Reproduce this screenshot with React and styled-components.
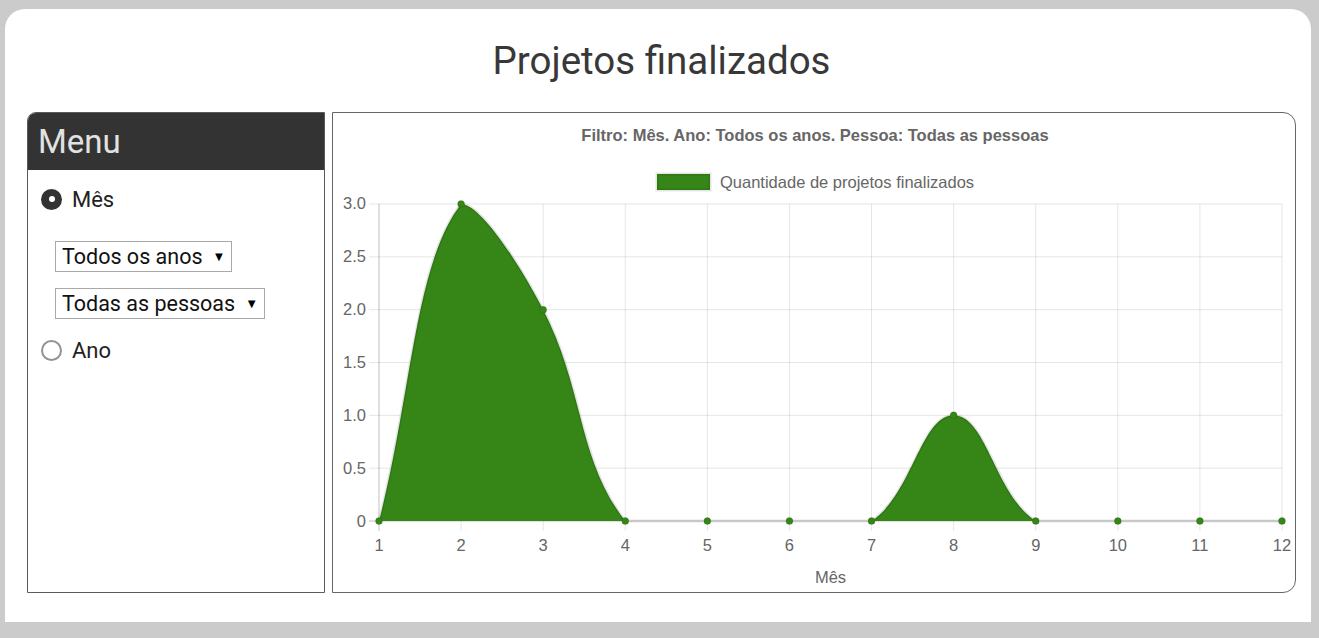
import React from 'react';
import styled, { createGlobalStyle } from 'styled-components';

const GlobalStyle = createGlobalStyle`
  html, body {
    margin: 0;
    padding: 0;
    background: #cbcbcb;
  }
  body {
    font-family: Roboto, "Liberation Sans", Arial, sans-serif;
  }
`;

const Page = styled.div`
  padding: 9px 8px 16px 5px;
`;

const Card = styled.div`
  background: #fff;
  border-radius: 20px 20px 0 0;
  height: 613px;
  padding: 0 15px 0 22px;
  box-sizing: border-box;
`;

const Title = styled.h1`
  margin: 0;
  padding-top: 30px;
  height: 103px;
  box-sizing: border-box;
  line-height: 44px;
  text-align: center;
  font-size: 38.5px;
  font-weight: 400;
  color: #383838;
`;

const Row = styled.div`
  display: flex;
  gap: 7px;
  height: 481px;
`;

const MenuPanel = styled.aside`
  width: 298px;
  flex: none;
  border: 1px solid #5a5a5a;
  border-top-left-radius: 9px;
  overflow: hidden;
  box-sizing: border-box;
`;

const MenuHeader = styled.div`
  background: #333;
  color: #e2e2e2;
  height: 57px;
  display: flex;
  align-items: center;
  padding-left: 10px;
  font-size: 33px;
`;

const MenuBody = styled.div`
  padding: 18px 0 0 13px;
`;

const RadioRow = styled.label`
  display: flex;
  align-items: center;
  gap: 10px;
  height: 22px;
  font-size: 22px;
  color: #222;
  margin-top: ${({ $top }) => $top || 0}px;
`;

const RadioDot = styled.span`
  width: 21px;
  height: 21px;
  border-radius: 50%;
  box-sizing: border-box;
  flex: none;
  display: flex;
  align-items: center;
  justify-content: center;
  background: ${({ $checked }) => ($checked ? '#333' : '#fff')};
  border: ${({ $checked }) => ($checked ? '2px solid #333' : '2.5px solid #939393')};
  &::after {
    content: '';
    display: ${({ $checked }) => ($checked ? 'block' : 'none')};
    width: 6px;
    height: 6px;
    border-radius: 50%;
    background: #fff;
  }
`;

const Selects = styled.div`
  display: flex;
  flex-direction: column;
  align-items: flex-start;
  gap: 16px;
  margin: 31px 0 0 14px;
`;

const SelectBox = styled.div`
  height: 31px;
  box-sizing: border-box;
  border: 1px solid #a9a9a9;
  display: flex;
  align-items: center;
  padding: 0 6px 0 6px;
  gap: 10px;
  font-size: 21.5px;
  color: #111;
  &::after {
    content: '▼';
    font-size: 13px;
    color: #000;
  }
`;

const ChartPanel = styled.section`
  flex: 1;
  border: 1px solid #666;
  border-radius: 0 13px 13px 0;
  box-sizing: border-box;
  overflow: hidden;
`;

const ChartSvg = styled.svg`
  display: block;
  font-family: "Liberation Sans", Arial, sans-serif;
`;

const data = [0, 3, 2, 0, 0, 0, 0, 1, 0, 0, 0, 0];
const X0 = 46;
const STEP = 82.09;
const Y0 = 408;
const UNIT = 105.67;
const LEFT = X0;
const RIGHT = X0 + STEP * 11;
const TOP = Y0 - 3 * UNIT;
const GREEN = '#358617';
const FS = 16.5;

const clamp = (v, a, b) => Math.max(a, Math.min(b, v));

function buildPaths() {
  const pts = data.map((v, i) => ({ x: X0 + i * STEP, y: Y0 - v * UNIT }));
  const cps = pts.map((cur, i) => {
    const prev = pts[i - 1] || cur;
    const next = pts[i + 1] || cur;
    const d01 = Math.hypot(cur.x - prev.x, cur.y - prev.y);
    const d12 = Math.hypot(next.x - cur.x, next.y - cur.y);
    let s01 = d01 / (d01 + d12);
    let s12 = d12 / (d01 + d12);
    if (isNaN(s01)) s01 = 0;
    if (isNaN(s12)) s12 = 0;
    const fa = 0.4 * s01;
    const fb = 0.4 * s12;
    return {
      p: { x: clamp(cur.x - fa * (next.x - prev.x), LEFT, RIGHT), y: clamp(cur.y - fa * (next.y - prev.y), TOP, Y0) },
      n: { x: clamp(cur.x + fb * (next.x - prev.x), LEFT, RIGHT), y: clamp(cur.y + fb * (next.y - prev.y), TOP, Y0) },
    };
  });
  let d = `M${pts[0].x},${pts[0].y}`;
  for (let i = 0; i < pts.length - 1; i++) {
    const a = cps[i].n;
    const b = cps[i + 1].p;
    const c = pts[i + 1];
    d += ` C${a.x},${a.y} ${b.x},${b.y} ${c.x},${c.y}`;
  }
  const fill = `${d} L${pts[pts.length - 1].x},${Y0} L${pts[0].x},${Y0} Z`;
  return { pts, line: d, fill };
}

const yTicks = [0, 0.5, 1, 1.5, 2, 2.5, 3];

function Chart() {
  const { pts, line, fill } = buildPaths();
  return (
    <ChartSvg width="962" height="479" viewBox="0 0 962 479">
      <text x="482" y="28" textAnchor="middle" fontSize={FS} fontWeight="700" fill="#666">
        Filtro: Mês. Ano: Todos os anos. Pessoa: Todas as pessoas
      </text>
      <rect x="324" y="61" width="53" height="16" fill={GREEN} stroke="rgba(0,0,0,0.1)" strokeWidth="3" />
      <text x="387" y="75" fontSize={FS} fill="#666">Quantidade de projetos finalizados</text>

      {yTicks.map((v) => {
        const y = Y0 - v * UNIT;
        return (
          <g key={v}>
            <line x1={LEFT - 10} x2={RIGHT} y1={y} y2={y} stroke={v === 0 ? 'rgba(0,0,0,0.25)' : 'rgba(0,0,0,0.1)'} />
            <text x="33" y={y + 5.5} textAnchor="end" fontSize={FS} fill="#666">
              {v === 0 ? '0' : v.toFixed(1)}
            </text>
          </g>
        );
      })}
      {data.map((_, i) => {
        const x = X0 + i * STEP;
        return (
          <g key={i}>
            <line x1={x} x2={x} y1={TOP} y2={Y0 + 10} stroke={i === 0 ? 'rgba(0,0,0,0.25)' : 'rgba(0,0,0,0.1)'} />
            <text x={x} y="438" textAnchor="middle" fontSize={FS} fill="#666">{i + 1}</text>
          </g>
        );
      })}
      <text x={(LEFT + RIGHT) / 2} y="470" textAnchor="middle" fontSize={FS} fill="#666">Mês</text>

      <path d={fill} fill={GREEN} />
      <path d={line} fill="none" stroke="rgba(0,0,0,0.1)" strokeWidth="3" />
      {pts.map((p, i) => (
        <circle key={i} cx={p.x} cy={p.y} r="3.5" fill={GREEN} stroke="rgba(0,0,0,0.1)" strokeWidth="1" />
      ))}
    </ChartSvg>
  );
}

export default function App() {
  return (
    <Page>
      <GlobalStyle />
      <Card>
        <Title>Projetos finalizados</Title>
        <Row>
          <MenuPanel>
            <MenuHeader>Menu</MenuHeader>
            <MenuBody>
              <RadioRow>
                <RadioDot $checked />
                Mês
              </RadioRow>
              <Selects>
                <SelectBox>Todos os anos</SelectBox>
                <SelectBox>Todas as pessoas</SelectBox>
              </Selects>
              <RadioRow $top={20}>
                <RadioDot />
                Ano
              </RadioRow>
            </MenuBody>
          </MenuPanel>
          <ChartPanel>
            <Chart />
          </ChartPanel>
        </Row>
      </Card>
    </Page>
  );
}
